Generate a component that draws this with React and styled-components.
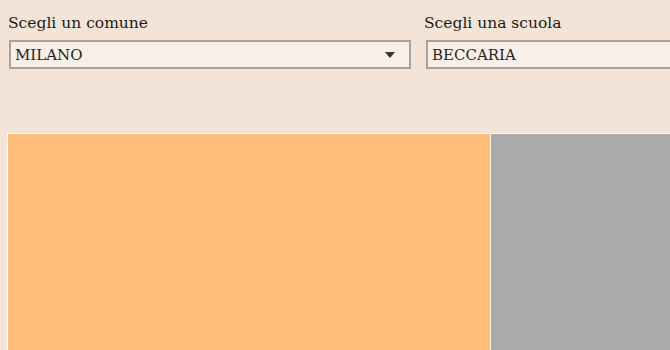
import React from 'react';
import styled, { createGlobalStyle } from 'styled-components';

const GlobalStyle = createGlobalStyle`
  html, body {
    margin: 0;
    padding: 0;
    background: #f4e4d7;
    overflow: hidden;
  }
  body {
    font-family: 'DejaVu Serif', 'Liberation Serif', serif;
    color: #222;
  }
`;

const Page = styled.div`
  padding: 13px 0 0 8px;
  width: 800px;
`;

const Filters = styled.div`
  display: grid;
  grid-template-columns: 408px 400px;
  column-gap: 8px;
`;

const Field = styled.div`
  display: flex;
  flex-direction: column;
`;

const Label = styled.label`
  font-size: 15.5px;
  line-height: 20px;
  margin-bottom: 7px;
  color: #1e1a17;
`;

const SelectBox = styled.div`
  box-sizing: border-box;
  width: ${(p) => p.$width}px;
  height: 29px;
  margin-left: ${(p) => p.$shift || 0}px;
  border: 2px solid #a9a19b;
  background: #f8efe8;
  display: flex;
  align-items: center;
  justify-content: space-between;
  padding: 0 14px 0 4px;
  font-size: 15px;
  color: #2a2420;
`;

const Arrow = styled.span`
  width: 0;
  height: 0;
  border-left: 5px solid transparent;
  border-right: 5px solid transparent;
  border-top: 6px solid #3a332e;
`;

const Treemap = styled.div`
  margin-top: 64px;
  margin-left: -1px;
  display: flex;
  gap: 1px;
  padding: 1px 0 0 1px;
  background: #ffffff;
  height: 240px;
`;

const Cell = styled.div`
  flex: 0 0 ${(p) => p.$w}px;
  background: ${(p) => p.$color};
`;

export default function App() {
  return (
    <>
      <GlobalStyle />
      <Page>
        <Filters>
          <Field>
            <Label>Scegli un comune</Label>
            <SelectBox $width={402} $shift={1}>
              <span>MILANO</span>
              <Arrow />
            </SelectBox>
          </Field>
          <Field>
            <Label>Scegli una scuola</Label>
            <SelectBox $width={400} $shift={2}>
              <span>BECCARIA</span>
            </SelectBox>
          </Field>
        </Filters>
        <Treemap>
          <Cell $w={482} $color="#ffbd79" />
          <Cell $w={400} $color="#aaaaaa" />
        </Treemap>
      </Page>
    </>
  );
}
